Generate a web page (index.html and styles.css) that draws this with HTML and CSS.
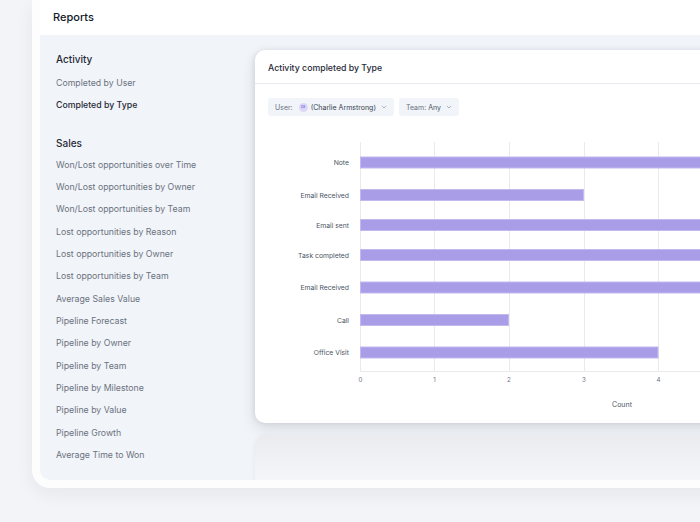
FILE: index.html
```html
<!DOCTYPE html>
<html>
<head>
<meta charset="utf-8">
<link rel="stylesheet" href="styles.css">
</head>
<body>
<div class="frame">
  <div class="inner">
    <div class="topbar">Reports</div>
    <div class="content">
      <nav class="sidebar">
        <div class="group">
          <div class="group-title first">Activity</div>
          <div class="item">Completed by User</div>
          <div class="item active">Completed by Type</div>
        </div>
        <div class="group">
          <div class="group-title">Sales</div>
          <div class="item">Won/Lost opportunities over Time</div>
          <div class="item">Won/Lost opportunities by Owner</div>
          <div class="item">Won/Lost opportunities by Team</div>
          <div class="item">Lost opportunities by Reason</div>
          <div class="item">Lost opportunities by Owner</div>
          <div class="item">Lost opportunities by Team</div>
          <div class="item">Average Sales Value</div>
          <div class="item">Pipeline Forecast</div>
          <div class="item">Pipeline by Owner</div>
          <div class="item">Pipeline by Team</div>
          <div class="item">Pipeline by Milestone</div>
          <div class="item">Pipeline by Value</div>
          <div class="item">Pipeline Growth</div>
          <div class="item">Average Time to Won</div>
        </div>
      </nav>
      <main class="main">
        <section class="card">
          <div class="card-head">Activity completed by Type</div>
          <div class="filters">
            <div class="pill"><span class="pill-label">User:</span><span class="avatar">CA</span><span class="pill-value">(Charlie Armstrong)</span><svg class="chev" viewBox="0 0 8 8"><path d="M2.2 3.2l1.8 1.8 1.8-1.8" fill="none" stroke="#9ca3af" stroke-width="0.8" stroke-linecap="round" stroke-linejoin="round"/></svg></div>
            <div class="pill"><span class="pill-label">Team:</span><span class="pill-value muted">Any</span><svg class="chev" viewBox="0 0 8 8"><path d="M2.2 3.2l1.8 1.8 1.8-1.8" fill="none" stroke="#9ca3af" stroke-width="0.8" stroke-linecap="round" stroke-linejoin="round"/></svg></div>
          </div>
          <svg class="chart" viewBox="255 130 460 293" width="460" height="293">
            <g stroke="#e8eaee" stroke-width="1">
              <line x1="360.5" y1="142" x2="360.5" y2="371"/>
              <line x1="434.5" y1="142" x2="434.5" y2="371"/>
              <line x1="509.5" y1="142" x2="509.5" y2="371"/>
              <line x1="584.5" y1="142" x2="584.5" y2="371"/>
              <line x1="658.5" y1="142" x2="658.5" y2="371"/>
              <line x1="360" y1="371.5" x2="715" y2="371.5"/>
            </g>
            <g fill="#aa9de8" stroke="#c2b9f0" stroke-width="1">
              <rect x="360.5" y="157" width="360" height="11"/>
              <rect x="360.5" y="189.5" width="223" height="11"/>
              <rect x="360.5" y="219.5" width="360" height="11"/>
              <rect x="360.5" y="249.5" width="360" height="11"/>
              <rect x="360.5" y="282" width="360" height="11"/>
              <rect x="360.5" y="314.5" width="148" height="11"/>
              <rect x="360.5" y="347" width="297.5" height="11"/>
            </g>
            <g class="ylab" text-anchor="end">
              <text x="349" y="164.5">Note</text>
              <text x="349" y="197.5">Email Received</text>
              <text x="349" y="227.5">Email sent</text>
              <text x="349" y="257.5">Task completed</text>
              <text x="349" y="290">Email Received</text>
              <text x="349" y="322.5">Call</text>
              <text x="349" y="355">Office Visit</text>
            </g>
            <g class="xlab" text-anchor="middle">
              <text x="360.5" y="381.5">0</text>
              <text x="434.5" y="381.5">1</text>
              <text x="509" y="381.5">2</text>
              <text x="584" y="381.5">3</text>
              <text x="658.5" y="381.5">4</text>
            </g>
            <text class="axis-title" x="622" y="406.5" text-anchor="middle">Count</text>
          </svg>
        </section>
        <section class="card ghost"></section>
      </main>
    </div>
  </div>
</div>
</body>
</html>
```
FILE: styles.css
```css
html, body {
  margin: 0;
  padding: 0;
}
body {
  width: 700px;
  height: 522px;
  overflow: hidden;
  background: #f2f4f7;
  font-family: Inter, "Noto Sans", sans-serif;
  color: #1f2937;
}
.frame {
  margin-left: 32px;
  width: 720px;
  height: 480px;
  border: 8px solid #fdfdfe;
  border-top: 0;
  border-right: 0;
  border-bottom-left-radius: 18px;
  background: #fdfdfe;
  box-shadow: 0 6px 18px rgba(30, 40, 60, 0.06);
}
.inner {
  height: 480px;
  overflow: hidden;
  background: #f1f4f8;
  border-bottom-left-radius: 10px;
  display: flex;
  flex-direction: column;
}
.topbar {
  height: 35px;
  flex: none;
  background: #ffffff;
  box-sizing: border-box;
  padding: 10px 0 0 13px;
  font-size: 11px;
  font-weight: 500;
  color: #111827;
}
.content {
  display: flex;
  flex: 1;
  min-height: 0;
}
.sidebar {
  width: 215px;
  flex: none;
  box-sizing: border-box;
  padding: 17px 0 0 16px;
}
.group {
  margin-bottom: 19px;
}
.group-title {
  font-size: 10px;
  font-weight: 500;
  color: #1f2937;
  height: 18px;
  line-height: 14px;
}
.group-title.first {
  height: 20px;
}
.item {
  font-size: 8.75px;
  color: #6b7280;
  height: 22.35px;
  line-height: 22.35px;
}
.item.active {
  color: #1f2937;
  font-weight: 500;
}
.main {
  flex: 1;
  padding-top: 15px;
  display: flex;
  flex-direction: column;
  gap: 12px;
}
.card {
  width: 470px;
  height: 373px;
  flex: none;
  background: #ffffff;
  border-radius: 10px 0 0 10px;
  box-shadow: 0 5px 14px rgba(20, 30, 50, 0.13), -1px 0 5px rgba(20, 30, 50, 0.07);
  overflow: hidden;
}
.card-head {
  height: 34px;
  box-sizing: border-box;
  border-bottom: 1px solid #e7eaee;
  padding: 12.5px 0 0 13px;
  font-size: 8.75px;
  font-weight: 500;
  color: #1f2937;
}
.filters {
  display: flex;
  gap: 5px;
  padding: 14px 0 0 13px;
}
.pill {
  height: 18px;
  display: flex;
  align-items: center;
  padding: 0 6px 0 7px;
  background: #f1f4f8;
  border-radius: 3px;
  font-size: 7px;
  gap: 4px;
}
.pill-label {
  color: #6b7280;
}
.pill-value {
  color: #374151;
  margin-left: -1px;
}
.pill-value.muted {
  color: #4b5563;
  margin-left: -2px;
}
.avatar {
  width: 9px;
  height: 9px;
  border-radius: 50%;
  background: #ddd8f8;
  color: #7c6ee0;
  font-size: 3px;
  font-weight: 700;
  display: flex;
  align-items: center;
  justify-content: center;
  margin-left: 2px;
}
.chev {
  width: 8px;
  height: 8px;
  margin-left: 0;
}
.chart {
  display: block;
  margin-top: 14px;
}
.ylab text {
  font-size: 6.8px;
  fill: #4b5563;
  font-family: Inter, "Noto Sans", sans-serif;
}
.xlab text {
  font-size: 6.2px;
  fill: #6b7280;
  font-family: Inter, "Noto Sans", sans-serif;
}
.axis-title {
  font-size: 7px;
  fill: #4b5563;
  font-family: Inter, "Noto Sans", sans-serif;
}
.ghost {
  height: 60px;
  background: linear-gradient(#e9ebef, #f3f5f8 70%);
  box-shadow: -1px 0 4px rgba(20, 30, 50, 0.04);
  border-radius: 10px 0 0 0;
}
```
